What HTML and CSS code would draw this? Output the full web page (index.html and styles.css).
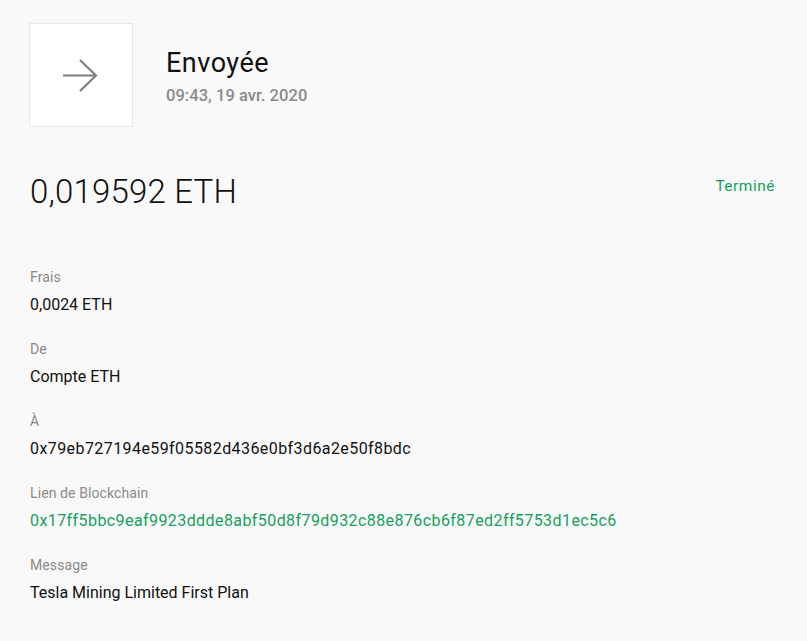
FILE: index.html
```html
<!DOCTYPE html>
<html lang="fr">
<head>
<meta charset="utf-8">
<link rel="stylesheet" href="styles.css">
</head>
<body>
<div class="page">
  <header class="head">
    <div class="icon-box">
      <svg width="40" height="40" viewBox="0 0 40 40" fill="none" stroke="#7f7f7f" stroke-width="2.2">
        <path d="M3 19.5H36"/>
        <path d="M20 4L36 19.5L20 35"/>
      </svg>
    </div>
    <div class="head-text">
      <div class="title">Envoyée</div>
      <div class="date">09:43, 19 avr. 2020</div>
    </div>
  </header>
  <div class="amount-row">
    <div class="amount">0,019592 ETH</div>
    <div class="status">Terminé</div>
  </div>
  <div class="fields">
    <div class="field"><div class="label">Frais</div><div class="value">0,0024 ETH</div></div>
    <div class="field"><div class="label">De</div><div class="value">Compte ETH</div></div>
    <div class="field"><div class="label">À</div><div class="value hash">0x79eb727194e59f05582d436e0bf3d6a2e50f8bdc</div></div>
    <div class="field"><div class="label">Lien de Blockchain</div><div class="value hash link">0x17ff5bbc9eaf9923ddde8abf50d8f79d932c88e876cb6f87ed2ff5753d1ec5c6</div></div>
    <div class="field"><div class="label">Message</div><div class="value">Tesla Mining Limited First Plan</div></div>
  </div>
</div>
</body>
</html>
```
FILE: styles.css
```css
html, body { margin: 0; padding: 0; }
body {
  background: #f9f9f9;
  font-family: "Roboto", "Liberation Sans", sans-serif;
  color: #111;
  width: 807px;
  height: 641px;
  overflow: hidden;
}
.page { padding: 23px 32px 0 29px; }
.head { display: flex; align-items: center; }
.icon-box {
  width: 102px; height: 102px;
  background: #fff;
  border: 1px solid #e8e8e8;
  display: flex; align-items: center; justify-content: center;
}
.icon-box svg { margin-left: -3px; margin-top: 1px; }
.head-text { margin-left: 33px; margin-top: 3px; }
.title { font-size: 27px; line-height: 32px; color: #111; letter-spacing: 0.5px; }
.date { font-size: 16.5px; line-height: 22px; color: #8a8a8a; font-weight: 500; margin-top: 6px; letter-spacing: 0.05px; }
.amount-row { display: flex; justify-content: space-between; align-items: flex-start; margin-top: 45px; }
.amount { font-size: 33px; font-weight: 300; line-height: 40px; color: #111; margin-left: 1px; letter-spacing: 0.2px; }
.status { font-size: 15.5px; color: #16a05d; line-height: 20px; margin-top: 4px; letter-spacing: 0.5px; }
.fields { margin-top: 56px; margin-left: 1px; }
.field { height: 72px; }
.label { font-size: 14px; color: #8a8a8a; line-height: 18px; letter-spacing: 0.1px; }
.value { font-size: 16px; color: #111; line-height: 20px; margin-top: 8.5px; letter-spacing: 0; }
.value.hash { letter-spacing: 0.42px; }
.value.link { color: #16a05d; }
```
